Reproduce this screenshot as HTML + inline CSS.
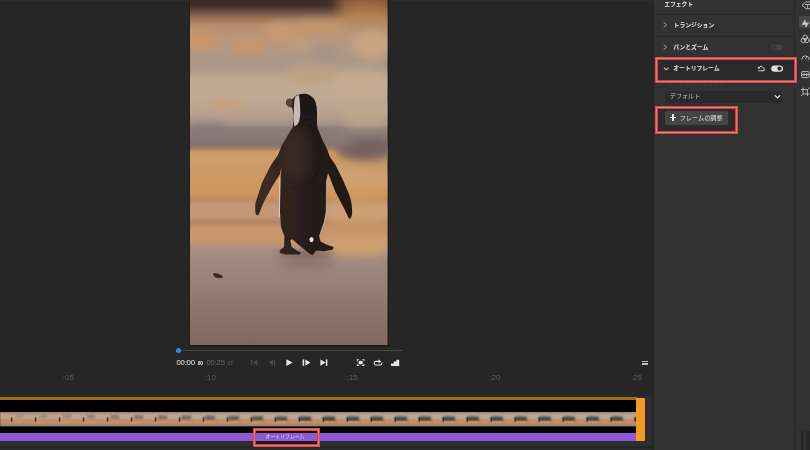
<!DOCTYPE html>
<html lang="ja">
<head>
<meta charset="utf-8">
<title>オートリフレーム</title>
<style>
html,body{margin:0;padding:0;}
body{width:810px;height:450px;overflow:hidden;background:#262626;position:relative;
  font-family:"Liberation Sans","Noto Sans CJK JP",sans-serif;color:#ddd;}
.abs{position:absolute;}
#app{position:absolute;left:0;top:0;width:810px;height:450px;overflow:hidden;background:#262626;}
/* right panel */
#panel{left:654px;top:0;width:156px;height:450px;background:#323232;}
#iconcol{left:794px;top:0;width:16px;height:450px;background:#323232;border-left:1px solid #2a2a2a;box-sizing:border-box;}
.sep{left:654px;width:140px;height:1px;background:#2a2a2a;}
.lbl{filter:blur(.3px);font-weight:bold;font-size:5.8px;line-height:8px;white-space:nowrap;color:#e4e4e4;letter-spacing:0;}
.redbox{box-sizing:border-box;box-shadow:inset 0 0 0 1.1px #dc4c4e, inset 0 0 0 2px #e57c7c, inset 0 0 0 3px #d93e40;}
.tl{filter:blur(.3px);font-size:8px;line-height:9px;color:#5c5c5c;white-space:nowrap;}
.tc{filter:blur(.25px);font-size:7.7px;line-height:8px;white-space:nowrap;letter-spacing:-0.2px;}
</style>
</head>
<body>
<div id="app">

<div class="abs" style="left:0;top:0;width:654px;height:1px;background:#2b2b2b;"></div>
<!-- preview photo -->
<div class="abs" style="left:188.5px;top:0;width:200.5px;height:346.5px;background:#1d1d1d;"></div>
<svg class="abs" id="photo" style="left:190px;top:0;" width="197.5" height="345" viewBox="190 0 197.5 345" preserveAspectRatio="none">
  <defs>
    <linearGradient id="sky" x1="0" y1="0" x2="0" y2="345" gradientUnits="userSpaceOnUse">
      <stop offset="0.0000" stop-color="#3c2c28"/>
      <stop offset="0.0145" stop-color="#3e2e29"/>
      <stop offset="0.0232" stop-color="#523c34"/>
      <stop offset="0.0348" stop-color="#6e5042"/>
      <stop offset="0.0464" stop-color="#8a6650"/>
      <stop offset="0.0580" stop-color="#a27858"/>
      <stop offset="0.0725" stop-color="#b48c6e"/>
      <stop offset="0.0870" stop-color="#b89276"/>
      <stop offset="0.1159" stop-color="#b8967e"/>
      <stop offset="0.1507" stop-color="#b09886"/>
      <stop offset="0.1739" stop-color="#ac9686"/>
      <stop offset="0.2029" stop-color="#ae9a88"/>
      <stop offset="0.2319" stop-color="#c0a890"/>
      <stop offset="0.2754" stop-color="#c2aa92"/>
      <stop offset="0.3130" stop-color="#bca692"/>
      <stop offset="0.3420" stop-color="#b29c8c"/>
      <stop offset="0.3594" stop-color="#a6928a"/>
      <stop offset="0.3710" stop-color="#8e7e7a"/>
      <stop offset="0.4000" stop-color="#887876"/>
      <stop offset="0.4174" stop-color="#84726c"/>
      <stop offset="0.4290" stop-color="#a07c60"/>
      <stop offset="0.4406" stop-color="#cc9c66"/>
      <stop offset="0.4638" stop-color="#d09e66"/>
      <stop offset="0.4928" stop-color="#ca9a6c"/>
      <stop offset="0.5217" stop-color="#cf9860"/>
      <stop offset="0.5623" stop-color="#ce965e"/>
      <stop offset="0.5797" stop-color="#bc8c64"/>
      <stop offset="0.5971" stop-color="#c49878"/>
      <stop offset="0.6261" stop-color="#c09876"/>
      <stop offset="0.6435" stop-color="#b28664"/>
      <stop offset="0.6609" stop-color="#c8966e"/>
      <stop offset="0.6957" stop-color="#c8986e"/>
      <stop offset="0.7101" stop-color="#b8927a"/>
      <stop offset="0.7246" stop-color="#a68e82"/>
      <stop offset="0.7536" stop-color="#a08a80"/>
      <stop offset="0.8116" stop-color="#988279"/>
      <stop offset="0.8696" stop-color="#8f7971"/>
      <stop offset="0.9275" stop-color="#877169"/>
      <stop offset="1.0000" stop-color="#816961"/>
    </linearGradient>
    <filter id="b6" x="-50%" y="-50%" width="200%" height="200%"><feGaussianBlur stdDeviation="5"/></filter>
    <filter id="b3" x="-50%" y="-50%" width="200%" height="200%"><feGaussianBlur stdDeviation="3"/></filter>
    <filter id="b1" x="-50%" y="-50%" width="200%" height="200%"><feGaussianBlur stdDeviation="0.7"/></filter>
    <clipPath id="pc"><rect x="190" y="0" width="197.5" height="345"/></clipPath>
  </defs>
  <g clip-path="url(#pc)">
    <rect x="190" y="0" width="198" height="345" fill="url(#sky)"/>
    <g id="blobs">
      <g filter="url(#b6)">
        <ellipse cx="366" cy="2" rx="32" ry="7" fill="#9c643c"/>
        <ellipse cx="366" cy="13" rx="32" ry="5" fill="#b07c50"/>
        <ellipse cx="366" cy="22" rx="32" ry="5" fill="#b88c64"/>
        <ellipse cx="200" cy="41" rx="17" ry="9" fill="#cc9666"/>
        <ellipse cx="248" cy="46" rx="17" ry="9" fill="#c8966c"/>
        <ellipse cx="280" cy="32" rx="16" ry="9" fill="#c89a72"/>
        <ellipse cx="318" cy="27" rx="28" ry="7" fill="#c6966e"/>
        <ellipse cx="312" cy="74" rx="26" ry="9" fill="#bea084"/>
        <ellipse cx="300" cy="44" rx="14" ry="6" fill="#c09c7c"/>
        <ellipse cx="324" cy="53" rx="14" ry="7" fill="#a4928a"/>
        <ellipse cx="372" cy="45" rx="20" ry="14" fill="#c8a482"/>
        <ellipse cx="360" cy="82" rx="30" ry="12" fill="#c6aa8e"/>
        <ellipse cx="225" cy="104" rx="18" ry="6" fill="#c8a07c"/>
        <ellipse cx="366" cy="108" rx="28" ry="8" fill="#c0a68c"/>
        <ellipse cx="366" cy="122" rx="26" ry="5" fill="#c0a488"/>
        <ellipse cx="207" cy="128" rx="20" ry="4" fill="#887878"/>
        <ellipse cx="366" cy="150" rx="30" ry="11" fill="#74625e"/>
        <ellipse cx="340" cy="138" rx="15" ry="8" fill="#8c7a74"/>
        <ellipse cx="358" cy="180" rx="36" ry="10" fill="#d0a070"/>
        <ellipse cx="358" cy="196" rx="36" ry="4" fill="#d09858"/>
        <ellipse cx="358" cy="212" rx="36" ry="8" fill="#cfa274"/>
        <ellipse cx="358" cy="222" rx="36" ry="4" fill="#c89868"/>
        <ellipse cx="358" cy="230" rx="36" ry="3" fill="#c08c58"/>
        <ellipse cx="358" cy="246" rx="36" ry="10" fill="#d0a070"/>
        <ellipse cx="305" cy="262" rx="30" ry="5" fill="#84706a"/>
      </g>
</g>
    <g id="penguin">
      <defs>
        <clipPath id="pclip"><path d="M304 93.8 C308 93.8 312.5 96.5 314.5 100 C316.5 104 317 109 317 114 L317 124 C317.2 127 318 129.5 319 131.5 C320 134 321 137 322 139 L327 149 L330 157
        L335.5 165 L342 178 L349 194 C351 200 352 205 352 209 C352.4 213 352 216 351 217.5 C350.4 219 349.4 219 348.6 218 L344.4 209 L335.5 192 L328 173
        L326.4 180 L326.2 209 C326 216 324 222 322 227 L319 236 L320.5 241.5 L326 244.5 L333.6 247 L333 249.6 L324 251.2 L316.4 250.4 L314.4 252.6 L312.8 255
        C310.4 254.6 308 252.6 305 250 L297 243.4 L292 239 L290.4 240.6 L291.4 246.6 L296.4 250.4 L300.6 252.600 L299.6 254.4 L286 254.4 L279.8 253 L279.8 250.4 L284 247 L284.4 236
        L281 227 L279.8 209 L280.6 178 L281.6 166 L280 174 L273 185 L264.4 200.5 L259 214 C258.4 215.6 256.6 215.8 255.8 214 C255 211 255 207 255.5 203
        L262 183 L271 165 L278 155 L282 145 L288 135 L293 126.4 L293.6 115 L292.2 107.6 C290 107.6 287.4 106.4 286.4 104.6 C285.6 102.6 286 100.4 288 99.2
        C289.4 98.6 291 98.8 292.2 99.6 L295 96.6 C297.6 94.8 300.6 93.8 304 93.8 Z"/></clipPath>
        <linearGradient id="pg" x1="255" y1="0" x2="352" y2="0" gradientUnits="userSpaceOnUse">
          <stop offset="0" stop-color="#382822"/>
          <stop offset="0.35" stop-color="#30221e"/>
          <stop offset="0.6" stop-color="#241a18"/>
          <stop offset="1" stop-color="#221917"/>
        </linearGradient>
      </defs>
      <ellipse cx="306" cy="253.5" rx="30" ry="2.6" fill="#5c4238" opacity=".55" filter="url(#b3)"/>
      <g filter="url(#b1)">
      <path fill="url(#pg)" d="M304 93.8 C308 93.8 312.5 96.5 314.5 100 C316.5 104 317 109 317 114 L317 124 C317.2 127 318 129.5 319 131.5 C320 134 321 137 322 139 L327 149 L330 157
        L335.5 165 L342 178 L349 194 C351 200 352 205 352 209 C352.4 213 352 216 351 217.5 C350.4 219 349.4 219 348.6 218 L344.4 209 L335.5 192 L328 173
        L326.4 180 L326.2 209 C326 216 324 222 322 227 L319 236 L320.5 241.5 L326 244.5 L333.6 247 L333 249.6 L324 251.2 L316.4 250.4 L314.4 252.6 L312.8 255
        C310.4 254.6 308 252.6 305 250 L297 243.4 L292 239 L290.4 240.6 L291.4 246.6 L296.4 250.4 L300.6 252.600 L299.6 254.4 L286 254.4 L279.8 253 L279.8 250.4 L284 247 L284.4 236
        L281 227 L279.8 209 L280.6 178 L281.6 166 L280 174 L273 185 L264.4 200.5 L259 214 C258.4 215.6 256.6 215.8 255.8 214 C255 211 255 207 255.5 203
        L262 183 L271 165 L278 155 L282 145 L288 135 L293 126.4 L293.6 115 L292.2 107.6 C290 107.6 287.4 106.4 286.4 104.6 C285.6 102.6 286 100.4 288 99.2
        C289.4 98.6 291 98.8 292.2 99.6 L295 96.6 C297.6 94.8 300.6 93.8 304 93.8 Z"/>
      <g clip-path="url(#pclip)"><ellipse cx="306" cy="104" rx="14" ry="18" fill="#191214" opacity=".6" filter="url(#b6)"/><ellipse cx="297" cy="155" rx="15" ry="26" fill="#4a382f" opacity=".4" filter="url(#b6)"/><ellipse cx="268" cy="185" rx="6" ry="20" fill="#44332b" opacity=".5" filter="url(#b3)" transform="rotate(22 268 185)"/></g>
      <path fill="#58433b" d="M292.4 99.4 C290.6 98.4 288.4 98.6 287 100 C285.6 101.8 285.8 104.4 287.4 105.8 C288.8 107 290.8 107.2 292.2 106.6 Z"/>
      <path fill="#c6bab4" d="M295.4 96.6 L298.8 95 C299.8 99 300.4 107 300.2 114 C300 119 299 122.400 297.4 124.6 L294.4 126.6 C293.4 122 293.400 117 293.8 112 C294 106 294 100 295.4 96.6 Z"/>
      <path fill="none" stroke="#dccfc8" stroke-width="1.1" opacity=".9" d="M279.8 178 L279.4 217"/>
      <path fill="none" stroke="#c8b8ae" stroke-width="0.9" opacity=".75" d="M326.6 181 L326.2 212 L324 226"/>
      <ellipse cx="311.5" cy="239.6" rx="2" ry="2.6" fill="#efe6e0"/>
      <path d="M213.6 273.4 C215 272.6 217.4 273.6 220 274.6 C222 275.4 223.4 276.4 222.6 277.4 C221.6 278.6 218 278 216 277.4 C214 276.8 212.6 274.6 213.6 273.4 Z" fill="#3a2c2a"/>
      </g>
</g>
  </g>
</svg>

<!-- scrubber -->
<div class="abs" style="left:178px;top:350px;width:224px;height:1px;background:#484848;"></div>
<div class="abs" style="left:175.6px;top:347.7px;width:5.6px;height:5.6px;border-radius:50%;background:#2d8ceb;"></div>

<!-- timecode -->
<div class="abs tc" style="left:176.5px;top:358.7px;color:#f0f0f0;">00:00 <span style="font-size:4.8px;font-weight:bold;margin-left:1px;letter-spacing:0;">00</span></div>
<div class="abs tc" style="left:206.5px;top:358.7px;color:#6a6a6a;">00:25 <span style="font-size:4.8px;margin-left:.8px;letter-spacing:0;">07</span></div>

<!-- transport icons -->
<svg class="abs" style="left:245px;top:356px;" width="160" height="14" viewBox="245 356 160 14">
  <g fill="#4a4a4a">
    <rect x="251" y="359.6" width="1.3" height="6"/><path d="M257.4 359.6 L253 362.6 L257.4 365.6Z"/>
    <path d="M273 359.6 L268.6 362.6 L273 365.6Z"/><rect x="273.8" y="359.6" width="1.3" height="6"/>
  </g>
  <g fill="#e6e6e6">
    <path d="M286.4 359.2 L292.6 362.6 L286.4 366Z"/>
    <rect x="302.6" y="359.4" width="1.6" height="6.4"/><path d="M305.4 359.4 L310.4 362.6 L305.4 365.8Z"/>
    <path d="M320.4 359.4 L325.6 362.6 L320.4 365.8Z"/><rect x="325.8" y="359.4" width="1.6" height="6.4"/>
    <!-- fullscreen -->
    <rect x="358.6" y="360.9" width="4" height="3.4"/>
    <path d="M356.8 359.2h2.2v.9h-1.3v1.2h-.9zM364.4 359.2v2.1h-.9v-1.2h-1.3v-.9zM356.8 366v-2.1h.9v1.2h1.3v.9zM364.4 366h-2.2v-.9h1.3v-1.2h.9z"/>
    <!-- quality -->
    <path d="M391 363.4h2.8v-1.8h2.6v-1.9h2.8v6.2h-8.2z"/>
  </g>
  <!-- loop -->
  <g fill="none" stroke="#e6e6e6" stroke-width="1.1">
    <path d="M379 361.4h-3a1.8 1.8 0 0 0 0 3.6h4.2a1.8 1.8 0 0 0 1.6-2.4"/>
  </g>
  <path d="M378.6 359.2l2.6 2.2l-2.6 2.2z" fill="#e6e6e6"/>
</svg>

<!-- menu icon -->
<div class="abs" style="left:642px;top:360.6px;width:6.4px;height:1.2px;background:#bdbdbd;"></div>
<div class="abs" style="left:642px;top:363.4px;width:6.4px;height:1.2px;background:#bdbdbd;"></div>

<!-- timeline ruler -->
<div class="abs tl" style="left:62.8px;top:373.4px;">:05</div>
<div class="abs tl" style="left:204.8px;top:373.4px;">:10</div>
<div class="abs tl" style="left:346.6px;top:373.4px;">:15</div>
<div class="abs tl" style="left:489.4px;top:373.4px;">:20</div>
<div class="abs tl" style="left:630.9px;top:373.4px;">:25</div>

<!-- track -->
<div class="abs" style="left:0;top:397px;width:652px;height:49.2px;background:#2e2e2e;"></div>
<div class="abs" style="left:0;top:447.6px;width:652px;height:2.4px;background:#2a2a2a;"></div>
<div class="abs" style="left:0;top:397.4px;width:637px;height:2.5px;background:#a06c28;"></div>
<div class="abs" style="left:0;top:399.8px;width:636.5px;height:33px;background:#000;"></div>
<svg class="abs" style="left:0;top:412.4px;" width="636.5" height="14.4" viewBox="0 0 636.5 14.4">
  <defs>
    <linearGradient id="tg" x1="0" y1="0" x2="0" y2="1">
      <stop offset="0" stop-color="#a8744c"/><stop offset="0.09" stop-color="#b08e76"/><stop offset="0.28" stop-color="#baa290"/><stop offset="0.46" stop-color="#bc9c82"/><stop offset="0.56" stop-color="#c68e5e"/><stop offset="0.74" stop-color="#c28e64"/><stop offset="0.84" stop-color="#a88c78"/><stop offset="1" stop-color="#987f73"/>
    </linearGradient>
    <filter id="tb" x="-20%" y="-20%" width="140%" height="140%"><feGaussianBlur stdDeviation="0.7"/></filter>
    <filter id="tb2" x="-30%" y="-50%" width="160%" height="200%"><feGaussianBlur stdDeviation="1.1"/></filter>
    <clipPath id="tclip"><rect x="0" y="0" width="636.5" height="14.4"/></clipPath>
  </defs>
  <rect x="0" y="0" width="636.5" height="14.4" fill="url(#tg)"/>
  <g clip-path="url(#tclip)">
    <rect x="-0.1" y="1.6" width="22" height="5" fill="#bca898" opacity="0.50" filter="url(#tb2)"/>
    <rect x="15.4" y="2.2" width="8.0" height="3.4" rx="1.8" fill="#8e8a8c" opacity="0.75" filter="url(#tb2)"/>
    <rect x="11.9" y="8.8" width="10" height="2.6" fill="#d0935a" opacity=".8" filter="url(#tb)"/>
    <path transform="translate(-1.1 0)" d="M12.5 5c.6 0 .8 .7 .7 1.400c.4 .8 .3 1.900 .1 2.400l-.3 1.200h-.9l-.3-1.200c-.3-.6-.3-1.600 0-2.400c-.1-.7 .1-1.400 .7-1.400z" fill="#3a2a26" opacity=".85" filter="url(#tb)"/>
    <rect x="23.9" y="1.6" width="22" height="5" fill="#bba899" opacity="0.53" filter="url(#tb2)"/>
    <rect x="39.0" y="2.4" width="8.4" height="3.5" rx="1.8" fill="#888486" opacity="0.77" filter="url(#tb2)"/>
    <rect x="35.9" y="8.8" width="10" height="2.6" fill="#d0935a" opacity=".8" filter="url(#tb)"/>
    <path transform="translate(22.9 0)" d="M12.5 5c.6 0 .8 .7 .7 1.400c.4 .8 .3 1.900 .1 2.400l-.3 1.200h-.9l-.3-1.200c-.3-.6-.3-1.600 0-2.400c-.1-.7 .1-1.400 .7-1.400z" fill="#3a2a26" opacity=".85" filter="url(#tb)"/>
    <rect x="47.9" y="1.6" width="22" height="5" fill="#bba89a" opacity="0.55" filter="url(#tb2)"/>
    <rect x="62.7" y="2.6" width="8.8" height="3.6" rx="1.8" fill="#827e80" opacity="0.78" filter="url(#tb2)"/>
    <rect x="59.9" y="8.8" width="10" height="2.6" fill="#d0935a" opacity=".8" filter="url(#tb)"/>
    <path transform="translate(46.9 0)" d="M12.5 5c.6 0 .8 .7 .7 1.400c.4 .8 .3 1.900 .1 2.400l-.3 1.200h-.9l-.3-1.200c-.3-.6-.3-1.600 0-2.400c-.1-.7 .1-1.400 .7-1.400z" fill="#3a2a26" opacity=".85" filter="url(#tb)"/>
    <rect x="71.9" y="1.6" width="22" height="5" fill="#baa89c" opacity="0.57" filter="url(#tb2)"/>
    <rect x="86.3" y="2.8" width="9.1" height="3.8" rx="1.8" fill="#7c787a" opacity="0.80" filter="url(#tb2)"/>
    <rect x="83.9" y="8.8" width="10" height="2.6" fill="#d0935a" opacity=".8" filter="url(#tb)"/>
    <path transform="translate(70.9 0)" d="M12.5 5c.6 0 .8 .7 .7 1.400c.4 .8 .3 1.900 .1 2.400l-.3 1.200h-.9l-.3-1.200c-.3-.6-.3-1.600 0-2.400c-.1-.7 .1-1.400 .7-1.400z" fill="#3a2a26" opacity=".85" filter="url(#tb)"/>
    <rect x="95.9" y="1.6" width="22" height="5" fill="#b9a99d" opacity="0.60" filter="url(#tb2)"/>
    <rect x="109.9" y="3.0" width="9.5" height="3.9" rx="1.8" fill="#767273" opacity="0.82" filter="url(#tb2)"/>
    <rect x="107.9" y="8.8" width="10" height="2.6" fill="#d0935a" opacity=".8" filter="url(#tb)"/>
    <path transform="translate(94.9 0)" d="M12.5 5c.6 0 .8 .7 .7 1.400c.4 .8 .3 1.900 .1 2.400l-.3 1.200h-.9l-.3-1.200c-.3-.6-.3-1.600 0-2.400c-.1-.7 .1-1.400 .7-1.400z" fill="#3a2a26" opacity=".85" filter="url(#tb)"/>
    <rect x="119.9" y="1.6" width="22" height="5" fill="#b9a99e" opacity="0.62" filter="url(#tb2)"/>
    <rect x="133.5" y="3.2" width="9.9" height="4.0" rx="1.8" fill="#706c6d" opacity="0.83" filter="url(#tb2)"/>
    <rect x="131.9" y="8.8" width="10" height="2.6" fill="#d0935a" opacity=".8" filter="url(#tb)"/>
    <path transform="translate(118.9 0)" d="M12.5 5c.6 0 .8 .7 .7 1.400c.4 .8 .3 1.900 .1 2.400l-.3 1.200h-.9l-.3-1.200c-.3-.6-.3-1.600 0-2.400c-.1-.7 .1-1.400 .7-1.400z" fill="#3a2a26" opacity=".85" filter="url(#tb)"/>
    <rect x="143.9" y="1.6" width="22" height="5" fill="#b8a99f" opacity="0.65" filter="url(#tb2)"/>
    <rect x="157.2" y="3.4" width="10.2" height="4.1" rx="1.8" fill="#6a6667" opacity="0.85" filter="url(#tb2)"/>
    <rect x="155.9" y="8.8" width="10" height="2.6" fill="#d0935a" opacity=".8" filter="url(#tb)"/>
    <path transform="translate(142.9 0)" d="M12.5 5c.6 0 .8 .7 .7 1.400c.4 .8 .3 1.900 .1 2.400l-.3 1.200h-.9l-.3-1.200c-.3-.6-.3-1.600 0-2.400c-.1-.7 .1-1.400 .7-1.400z" fill="#3a2a26" opacity=".85" filter="url(#tb)"/>
    <rect x="167.9" y="1.6" width="22" height="5" fill="#b7a9a0" opacity="0.68" filter="url(#tb2)"/>
    <rect x="180.8" y="3.6" width="10.6" height="4.2" rx="1.8" fill="#635f61" opacity="0.87" filter="url(#tb2)"/>
    <rect x="179.9" y="8.8" width="10" height="2.6" fill="#d0935a" opacity=".8" filter="url(#tb)"/>
    <path transform="translate(166.9 0)" d="M12.5 5c.6 0 .8 .7 .7 1.400c.4 .8 .3 1.900 .1 2.400l-.3 1.200h-.9l-.3-1.200c-.3-.6-.3-1.600 0-2.400c-.1-.7 .1-1.400 .7-1.400z" fill="#3a2a26" opacity=".85" filter="url(#tb)"/>
    <rect x="191.9" y="1.6" width="22" height="5" fill="#b7a9a1" opacity="0.70" filter="url(#tb2)"/>
    <rect x="204.4" y="3.8" width="11.0" height="4.3" rx="1.8" fill="#5d595b" opacity="0.88" filter="url(#tb2)"/>
    <rect x="203.9" y="8.8" width="10" height="2.6" fill="#d0935a" opacity=".8" filter="url(#tb)"/>
    <path transform="translate(190.9 0)" d="M12.5 5c.6 0 .8 .7 .7 1.400c.4 .8 .3 1.900 .1 2.400l-.3 1.200h-.9l-.3-1.200c-.3-.6-.3-1.600 0-2.400c-.1-.7 .1-1.400 .7-1.400z" fill="#3a2a26" opacity=".85" filter="url(#tb)"/>
    <rect x="215.9" y="1.6" width="22" height="5" fill="#b6aaa2" opacity="0.72" filter="url(#tb2)"/>
    <rect x="228.0" y="4.0" width="11.4" height="4.4" rx="1.8" fill="#575354" opacity="0.90" filter="url(#tb2)"/>
    <rect x="227.9" y="8.8" width="10" height="2.6" fill="#d0935a" opacity=".8" filter="url(#tb)"/>
    <path transform="translate(214.9 0)" d="M12.5 5c.6 0 .8 .7 .7 1.400c.4 .8 .3 1.900 .1 2.400l-.3 1.200h-.9l-.3-1.200c-.3-.6-.3-1.600 0-2.400c-.1-.7 .1-1.400 .7-1.400z" fill="#3a2a26" opacity=".85" filter="url(#tb)"/>
    <rect x="239.9" y="1.6" width="22" height="5" fill="#b5aaa4" opacity="0.75" filter="url(#tb2)"/>
    <rect x="251.6" y="4.2" width="11.8" height="4.6" rx="1.8" fill="#514d4e" opacity="0.92" filter="url(#tb2)"/>
    <rect x="251.9" y="8.8" width="10" height="2.6" fill="#d0935a" opacity=".8" filter="url(#tb)"/>
    <path transform="translate(238.9 0)" d="M12.5 5c.6 0 .8 .7 .7 1.400c.4 .8 .3 1.900 .1 2.400l-.3 1.200h-.9l-.3-1.200c-.3-.6-.3-1.600 0-2.400c-.1-.7 .1-1.400 .7-1.400z" fill="#3a2a26" opacity=".85" filter="url(#tb)"/>
    <rect x="263.9" y="1.6" width="22" height="5" fill="#b5aaa5" opacity="0.77" filter="url(#tb2)"/>
    <rect x="275.3" y="4.4" width="12.1" height="4.7" rx="1.8" fill="#4b4748" opacity="0.93" filter="url(#tb2)"/>
    <rect x="275.9" y="8.8" width="10" height="2.6" fill="#d0935a" opacity=".8" filter="url(#tb)"/>
    <path transform="translate(262.9 0)" d="M12.5 5c.6 0 .8 .7 .7 1.400c.4 .8 .3 1.900 .1 2.400l-.3 1.200h-.9l-.3-1.200c-.3-.6-.3-1.600 0-2.400c-.1-.7 .1-1.400 .7-1.400z" fill="#3a2a26" opacity=".85" filter="url(#tb)"/>
    <rect x="287.9" y="1.6" width="22" height="5" fill="#b4aaa6" opacity="0.80" filter="url(#tb2)"/>
    <rect x="298.9" y="4.6" width="12.5" height="4.8" rx="1.8" fill="#454142" opacity="0.95" filter="url(#tb2)"/>
    <rect x="299.9" y="8.8" width="10" height="2.6" fill="#d0935a" opacity=".8" filter="url(#tb)"/>
    <path transform="translate(286.9 0)" d="M12.5 5c.6 0 .8 .7 .7 1.400c.4 .8 .3 1.900 .1 2.400l-.3 1.200h-.9l-.3-1.200c-.3-.6-.3-1.600 0-2.400c-.1-.7 .1-1.400 .7-1.400z" fill="#3a2a26" opacity=".85" filter="url(#tb)"/>
    <rect x="311.9" y="1.6" width="22" height="5" fill="#b4aaa6" opacity="0.80" filter="url(#tb2)"/>
    <rect x="322.9" y="4.6" width="12.5" height="4.8" rx="1.8" fill="#454142" opacity="0.95" filter="url(#tb2)"/>
    <rect x="323.9" y="8.8" width="10" height="2.6" fill="#d0935a" opacity=".8" filter="url(#tb)"/>
    <path transform="translate(310.9 0)" d="M12.5 5c.6 0 .8 .7 .7 1.400c.4 .8 .3 1.900 .1 2.400l-.3 1.200h-.9l-.3-1.200c-.3-.6-.3-1.600 0-2.400c-.1-.7 .1-1.400 .7-1.400z" fill="#3a2a26" opacity=".85" filter="url(#tb)"/>
    <rect x="335.9" y="1.6" width="22" height="5" fill="#b4aaa6" opacity="0.80" filter="url(#tb2)"/>
    <rect x="346.9" y="4.6" width="12.5" height="4.8" rx="1.8" fill="#454142" opacity="0.95" filter="url(#tb2)"/>
    <rect x="347.9" y="8.8" width="10" height="2.6" fill="#d0935a" opacity=".8" filter="url(#tb)"/>
    <path transform="translate(334.9 0)" d="M12.5 5c.6 0 .8 .7 .7 1.400c.4 .8 .3 1.900 .1 2.400l-.3 1.200h-.9l-.3-1.200c-.3-.6-.3-1.600 0-2.400c-.1-.7 .1-1.400 .7-1.400z" fill="#3a2a26" opacity=".85" filter="url(#tb)"/>
    <rect x="359.9" y="1.6" width="22" height="5" fill="#b4aaa6" opacity="0.80" filter="url(#tb2)"/>
    <rect x="370.9" y="4.6" width="12.5" height="4.8" rx="1.8" fill="#454142" opacity="0.95" filter="url(#tb2)"/>
    <rect x="371.9" y="8.8" width="10" height="2.6" fill="#d0935a" opacity=".8" filter="url(#tb)"/>
    <path transform="translate(358.9 0)" d="M12.5 5c.6 0 .8 .7 .7 1.400c.4 .8 .3 1.900 .1 2.400l-.3 1.200h-.9l-.3-1.200c-.3-.6-.3-1.600 0-2.400c-.1-.7 .1-1.400 .7-1.400z" fill="#3a2a26" opacity=".85" filter="url(#tb)"/>
    <rect x="383.9" y="1.6" width="22" height="5" fill="#b4aaa6" opacity="0.80" filter="url(#tb2)"/>
    <rect x="394.9" y="4.6" width="12.5" height="4.8" rx="1.8" fill="#454142" opacity="0.95" filter="url(#tb2)"/>
    <rect x="395.9" y="8.8" width="10" height="2.6" fill="#d0935a" opacity=".8" filter="url(#tb)"/>
    <path transform="translate(382.9 0)" d="M12.5 5c.6 0 .8 .7 .7 1.400c.4 .8 .3 1.900 .1 2.400l-.3 1.200h-.9l-.3-1.200c-.3-.6-.3-1.600 0-2.400c-.1-.7 .1-1.400 .7-1.400z" fill="#3a2a26" opacity=".85" filter="url(#tb)"/>
    <rect x="407.9" y="1.6" width="22" height="5" fill="#b4aaa6" opacity="0.80" filter="url(#tb2)"/>
    <rect x="418.9" y="4.6" width="12.5" height="4.8" rx="1.8" fill="#454142" opacity="0.95" filter="url(#tb2)"/>
    <rect x="419.9" y="8.8" width="10" height="2.6" fill="#d0935a" opacity=".8" filter="url(#tb)"/>
    <path transform="translate(406.9 0)" d="M12.5 5c.6 0 .8 .7 .7 1.400c.4 .8 .3 1.900 .1 2.400l-.3 1.200h-.9l-.3-1.200c-.3-.6-.3-1.600 0-2.400c-.1-.7 .1-1.400 .7-1.400z" fill="#3a2a26" opacity=".85" filter="url(#tb)"/>
    <rect x="431.9" y="1.6" width="22" height="5" fill="#b4aaa6" opacity="0.80" filter="url(#tb2)"/>
    <rect x="442.9" y="4.6" width="12.5" height="4.8" rx="1.8" fill="#454142" opacity="0.95" filter="url(#tb2)"/>
    <rect x="443.9" y="8.8" width="10" height="2.6" fill="#d0935a" opacity=".8" filter="url(#tb)"/>
    <path transform="translate(430.9 0)" d="M12.5 5c.6 0 .8 .7 .7 1.400c.4 .8 .3 1.900 .1 2.400l-.3 1.200h-.9l-.3-1.200c-.3-.6-.3-1.600 0-2.400c-.1-.7 .1-1.400 .7-1.400z" fill="#3a2a26" opacity=".85" filter="url(#tb)"/>
    <rect x="455.9" y="1.6" width="22" height="5" fill="#b4aaa6" opacity="0.80" filter="url(#tb2)"/>
    <rect x="466.9" y="4.6" width="12.5" height="4.8" rx="1.8" fill="#454142" opacity="0.95" filter="url(#tb2)"/>
    <rect x="467.9" y="8.8" width="10" height="2.6" fill="#d0935a" opacity=".8" filter="url(#tb)"/>
    <path transform="translate(454.9 0)" d="M12.5 5c.6 0 .8 .7 .7 1.400c.4 .8 .3 1.900 .1 2.400l-.3 1.200h-.9l-.3-1.200c-.3-.6-.3-1.600 0-2.400c-.1-.7 .1-1.400 .7-1.400z" fill="#3a2a26" opacity=".85" filter="url(#tb)"/>
    <rect x="479.9" y="1.6" width="22" height="5" fill="#b4aaa6" opacity="0.80" filter="url(#tb2)"/>
    <rect x="490.9" y="4.6" width="12.5" height="4.8" rx="1.8" fill="#454142" opacity="0.95" filter="url(#tb2)"/>
    <rect x="491.9" y="8.8" width="10" height="2.6" fill="#d0935a" opacity=".8" filter="url(#tb)"/>
    <path transform="translate(478.9 0)" d="M12.5 5c.6 0 .8 .7 .7 1.400c.4 .8 .3 1.900 .1 2.400l-.3 1.200h-.9l-.3-1.200c-.3-.6-.3-1.600 0-2.400c-.1-.7 .1-1.400 .7-1.400z" fill="#3a2a26" opacity=".85" filter="url(#tb)"/>
    <rect x="503.9" y="1.6" width="22" height="5" fill="#b4aaa6" opacity="0.80" filter="url(#tb2)"/>
    <rect x="514.9" y="4.6" width="12.5" height="4.8" rx="1.8" fill="#454142" opacity="0.95" filter="url(#tb2)"/>
    <rect x="515.9" y="8.8" width="10" height="2.6" fill="#d0935a" opacity=".8" filter="url(#tb)"/>
    <path transform="translate(502.9 0)" d="M12.5 5c.6 0 .8 .7 .7 1.400c.4 .8 .3 1.900 .1 2.400l-.3 1.200h-.9l-.3-1.200c-.3-.6-.3-1.600 0-2.400c-.1-.7 .1-1.400 .7-1.400z" fill="#3a2a26" opacity=".85" filter="url(#tb)"/>
    <rect x="527.9" y="1.6" width="22" height="5" fill="#b4aaa6" opacity="0.80" filter="url(#tb2)"/>
    <rect x="538.9" y="4.6" width="12.5" height="4.8" rx="1.8" fill="#454142" opacity="0.95" filter="url(#tb2)"/>
    <rect x="539.9" y="8.8" width="10" height="2.6" fill="#d0935a" opacity=".8" filter="url(#tb)"/>
    <path transform="translate(526.9 0)" d="M12.5 5c.6 0 .8 .7 .7 1.400c.4 .8 .3 1.900 .1 2.400l-.3 1.200h-.9l-.3-1.200c-.3-.6-.3-1.600 0-2.400c-.1-.7 .1-1.400 .7-1.400z" fill="#3a2a26" opacity=".85" filter="url(#tb)"/>
    <rect x="551.9" y="1.6" width="22" height="5" fill="#b4aaa6" opacity="0.80" filter="url(#tb2)"/>
    <rect x="562.9" y="4.6" width="12.5" height="4.8" rx="1.8" fill="#454142" opacity="0.95" filter="url(#tb2)"/>
    <rect x="563.9" y="8.8" width="10" height="2.6" fill="#d0935a" opacity=".8" filter="url(#tb)"/>
    <path transform="translate(550.9 0)" d="M12.5 5c.6 0 .8 .7 .7 1.400c.4 .8 .3 1.900 .1 2.400l-.3 1.200h-.9l-.3-1.200c-.3-.6-.3-1.600 0-2.400c-.1-.7 .1-1.400 .7-1.400z" fill="#3a2a26" opacity=".85" filter="url(#tb)"/>
    <rect x="575.9" y="1.6" width="22" height="5" fill="#b4aaa6" opacity="0.80" filter="url(#tb2)"/>
    <rect x="586.9" y="4.6" width="12.5" height="4.8" rx="1.8" fill="#454142" opacity="0.95" filter="url(#tb2)"/>
    <rect x="587.9" y="8.8" width="10" height="2.6" fill="#d0935a" opacity=".8" filter="url(#tb)"/>
    <path transform="translate(574.9 0)" d="M12.5 5c.6 0 .8 .7 .7 1.400c.4 .8 .3 1.900 .1 2.400l-.3 1.200h-.9l-.3-1.200c-.3-.6-.3-1.600 0-2.400c-.1-.7 .1-1.400 .7-1.400z" fill="#3a2a26" opacity=".85" filter="url(#tb)"/>
    <rect x="599.9" y="1.6" width="22" height="5" fill="#b4aaa6" opacity="0.80" filter="url(#tb2)"/>
    <rect x="610.9" y="4.6" width="12.5" height="4.8" rx="1.8" fill="#454142" opacity="0.95" filter="url(#tb2)"/>
    <rect x="611.9" y="8.8" width="10" height="2.6" fill="#d0935a" opacity=".8" filter="url(#tb)"/>
    <path transform="translate(598.9 0)" d="M12.5 5c.6 0 .8 .7 .7 1.400c.4 .8 .3 1.900 .1 2.400l-.3 1.200h-.9l-.3-1.200c-.3-.6-.3-1.600 0-2.400c-.1-.7 .1-1.400 .7-1.400z" fill="#3a2a26" opacity=".85" filter="url(#tb)"/>
    <rect x="623.9" y="1.6" width="22" height="5" fill="#b4aaa6" opacity="0.80" filter="url(#tb2)"/>
    <rect x="634.9" y="4.6" width="12.5" height="4.8" rx="1.8" fill="#454142" opacity="0.95" filter="url(#tb2)"/>
    <rect x="635.9" y="8.8" width="10" height="2.6" fill="#d0935a" opacity=".8" filter="url(#tb)"/>
    <path transform="translate(622.9 0)" d="M12.5 5c.6 0 .8 .7 .7 1.400c.4 .8 .3 1.900 .1 2.400l-.3 1.200h-.9l-.3-1.200c-.3-.6-.3-1.600 0-2.400c-.1-.7 .1-1.400 .7-1.400z" fill="#3a2a26" opacity=".85" filter="url(#tb)"/>
  </g>
</svg>
<div class="abs" style="left:0;top:432.6px;width:636.5px;height:8px;background:#9257d6;"></div>
<div class="abs" style="left:636px;top:398.2px;width:8.7px;height:42.8px;background:#f39a22;border-radius:0.8px;"></div>
<div class="abs" style="left:265px;top:433.1px;width:40px;height:7px;filter:blur(.25px);font-size:4.9px;line-height:7px;color:#e6d6fa;white-space:nowrap;text-align:center;">オートリフレーム</div>
<div class="abs" style="left:256px;top:440.6px;width:62px;height:3.4px;background:#1b1b1b;"></div>
<div class="abs redbox" style="left:253.4px;top:428.3px;width:67px;height:18.5px;"></div>

<!-- right panel -->
<div class="abs" id="panel"></div>
<div class="abs" id="iconcol"></div>
<div class="abs sep" style="top:14.4px;"></div>
<div class="abs sep" style="top:36.4px;"></div>
<div class="abs" style="left:656px;top:58px;width:140px;height:23.6px;background:#2a2a2a;"></div>
<div class="abs" style="left:656px;top:107px;width:81px;height:25px;background:#2b2b2b;"></div>

<div class="abs" style="left:665.4px;top:91.2px;width:116.8px;height:11.6px;background:#2a2a2a;border-radius:1px;"></div>
<div class="abs lbl" style="left:664.2px;top:0px;">エフェクト</div>
<div class="abs lbl" style="left:673.6px;top:20.8px;">トランジション</div>
<div class="abs lbl" style="left:673.3px;top:43.2px;">パンとズーム</div>
<div class="abs lbl" style="left:673.3px;top:64.4px;">オートリフレーム</div>

<svg class="abs" style="left:654px;top:0;" width="156" height="130" viewBox="654 0 156 130">
  <g fill="none" stroke="#bdbdbd" stroke-width="0.9" stroke-linecap="round" stroke-linejoin="round">
    <path d="M664.2 22.6l2.2 2.2l-2.2 2.2"/>
    <path d="M664.2 45l2.2 2.2l-2.2 2.2"/>
    <path d="M664.3 68l1.9 1.9l1.9-1.9" stroke-width="1.1"/>
  </g>
  <path d="M775.2 95.6l2.3 2.3l2.3-2.3" fill="none" stroke="#f0f0f0" stroke-width="1.3" stroke-linecap="round" stroke-linejoin="round"/>
  <!-- toggle off -->
  <rect x="771.5" y="44.8" width="11" height="5.2" rx="2.6" fill="#454545"/>
  <circle cx="774.3" cy="47.4" r="1.9" fill="#333"/>
  <!-- toggle on -->
  <rect x="771.2" y="65.4" width="11.8" height="6.4" rx="3.2" fill="#e0e0e0"/>
  <circle cx="779.5" cy="68.6" r="2.1" fill="#2a2a2a"/>
  <!-- reset icon -->
  <g fill="none" stroke="#d8d8d8" stroke-width="0.9" stroke-linejoin="round">
    <path d="M758.2 70.8h6v-2.4l-3-2.4l-3 2.4"/>
  </g>
  <path d="M757.4 67.2l2.4-.4l-.4 2.4z" fill="#d8d8d8"/>
</svg>

<div class="abs redbox" style="left:654.5px;top:56.8px;width:142.9px;height:26.5px;"></div>

<div class="abs" style="left:666.4px;top:79.8px;font-size:5.9px;line-height:7px;color:#474747;white-space:nowrap;clip-path:inset(3.4px 0 0 0);">モーションプリセット</div>

<div class="abs" style="left:669.8px;top:92.4px;filter:blur(.3px);font-size:6.1px;line-height:8.6px;color:#c4c4c4;white-space:nowrap;">デフォルト</div>

<div class="abs" style="left:664.6px;top:110.8px;width:63.4px;height:14px;background:#454545;border-radius:1px;"></div>
<div class="abs" style="left:669.8px;top:116.9px;width:6.2px;height:1.3px;background:#eee;"></div>
<div class="abs" style="left:672.25px;top:114.4px;width:1.3px;height:6.2px;background:#eee;"></div>
<div class="abs" style="left:679.6px;top:113px;filter:blur(.3px);font-size:6.2px;line-height:9px;color:#e0e0e0;white-space:nowrap;">フレームの調整</div>
<div class="abs redbox" style="left:654.7px;top:105.6px;width:83.6px;height:28px;"></div>

<!-- icon column -->
<div class="abs" style="left:795px;top:428.6px;width:15px;height:1px;background:#2d2d2d;"></div>
<div class="abs" style="left:800.8px;top:431px;width:3.5px;height:19px;background:#272727;"></div>
<div class="abs" style="left:806.2px;top:431px;width:3.8px;height:19px;background:#272727;"></div>
<div class="abs" style="left:799px;top:15.6px;width:11px;height:12.8px;background:#474747;border-radius:1.5px 0 0 1.5px;"></div>
<svg class="abs" style="left:796px;top:0;" width="14" height="100" viewBox="796 0 14 100">
  <g fill="none" stroke="#c4c4c4" stroke-width="0.9" stroke-linejoin="round" stroke-linecap="round">
    <path d="M810 1.9H806L802 5.3L806 8.7H810M805.6 4.5H809.8M807.7 4.5V7.6"/>
    <path d="M802 24.6l3.2-4.8v3h3.6l-3.2 4.6v-2.8z" fill="#d0d0d0" stroke-width=".5"/>
    <circle cx="805.2" cy="37.4" r="2.3"/><circle cx="803.4" cy="40.4" r="2.3"/><circle cx="807" cy="40.4" r="2.3"/>
    <path d="M801.8 59.4a3.6 3.6 0 1 1 7.2 0M805.4 58.8l1.6-2"/>
    <rect x="801.6" y="71.6" width="7.4" height="6" rx=".8"/><path d="M801.6 74.6h7.4M804 73.4v2.4M806.6 73.4v2.4"/>
    <path d="M803 88v6h6M801.4 89.6h6v6M807.4 89.6l1.8-1.8M803 94l-1.6 1.6"/>
  </g>
</svg>

</div>
</body>
</html>
